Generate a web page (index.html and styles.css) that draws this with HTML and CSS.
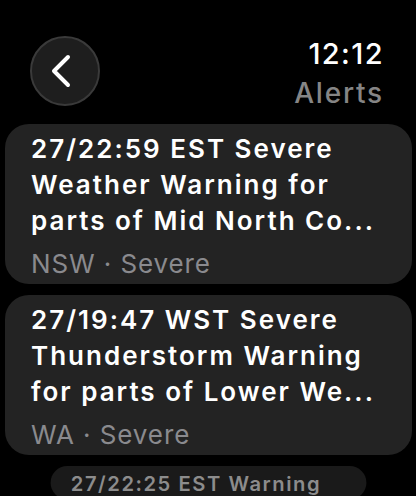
FILE: index.html
```html
<!DOCTYPE html>
<html lang="en">
<head>
    <meta charset="UTF-8">
    <meta name="viewport" content="width=device-width, initial-scale=1.0">
    <title>Alerts</title>
    <link rel="stylesheet" href="styles.css">
</head>
<body>

    <div class="header">
        <a href="#" class="backButton">
            <svg width="24" height="34" viewBox="0 0 24 34">
                <path d="M18 3 L4 17 L18 31" fill="none" stroke="white" stroke-width="4" stroke-linecap="round" stroke-linejoin="round"/>
            </svg>
        </a>
        <div class="titleBlock">
            <div class="time">12:12</div>
            <div class="pageTitle">Alerts</div>
        </div>
    </div>

    <div class="alertList">
        <div class="alertItem">
            <h3>27/22:59 EST Severe Weather Warning for parts of Mid North Co...</h3>
            <p>NSW · Severe</p>
        </div>
        <div class="alertItem">
            <h3>27/19:47 WST Severe Thunderstorm Warning for parts of Lower We...</h3>
            <p>WA · Severe</p>
        </div>
        <div class="alertItem behind">
            <h3>27/22:25 EST Warning</h3>
        </div>
    </div>

</body>
</html>
```

FILE: styles.css
```css
body {
    margin: 0;
    font-family: Inter, "Noto Sans", sans-serif;
    background-color: black;
    color: white;
    width: 416px;
    height: 496px;
    overflow: hidden;
}

.header {
    display: flex;
    justify-content: space-between;
    align-items: flex-start;
    padding: 36px 32px 0 30px;
    height: 88px;
}

.backButton {
    width: 66px;
    height: 66px;
    border-radius: 50%;
    background-color: #1e1e1e;
    border: 2px solid #3a3a3a;
    display: flex;
    align-items: center;
    justify-content: center;
}

.backButton svg {
    margin-right: 6px;
}

.titleBlock {
    text-align: right;
    margin-top: -1px;
}

.time {
    font-size: 29px;
    font-weight: 500;
    line-height: 38px;
    letter-spacing: 1.4px;
}

.pageTitle {
    font-size: 28px;
    font-weight: 500;
    line-height: 40px;
    letter-spacing: 1.8px;
    color: #858585;
}

/* Lista de alertas */
.alertList {
    display: flex;
    flex-direction: column;
    gap: 11px;
    padding: 0 4px 0 5px;
}

.alertItem {
    background-color: #232323;
    border-radius: 24px;
    padding: 7px 18px 2px 26px;
}

.alertItem h3 {
    margin: 0;
    font-size: 26px;
    font-weight: 600;
    line-height: 36px;
    letter-spacing: 2px;
}

.alertItem p {
    margin: 7px 0 0;
    font-size: 26px;
    line-height: 36px;
    letter-spacing: 0.9px;
    color: #8a8a8e;
}

.behind {
    background-color: #1a1a1a;
    transform: scale(0.776);
    transform-origin: top center;
    padding-top: 5px;
}

.behind h3 {
    color: #8c8c8c;
}
```
